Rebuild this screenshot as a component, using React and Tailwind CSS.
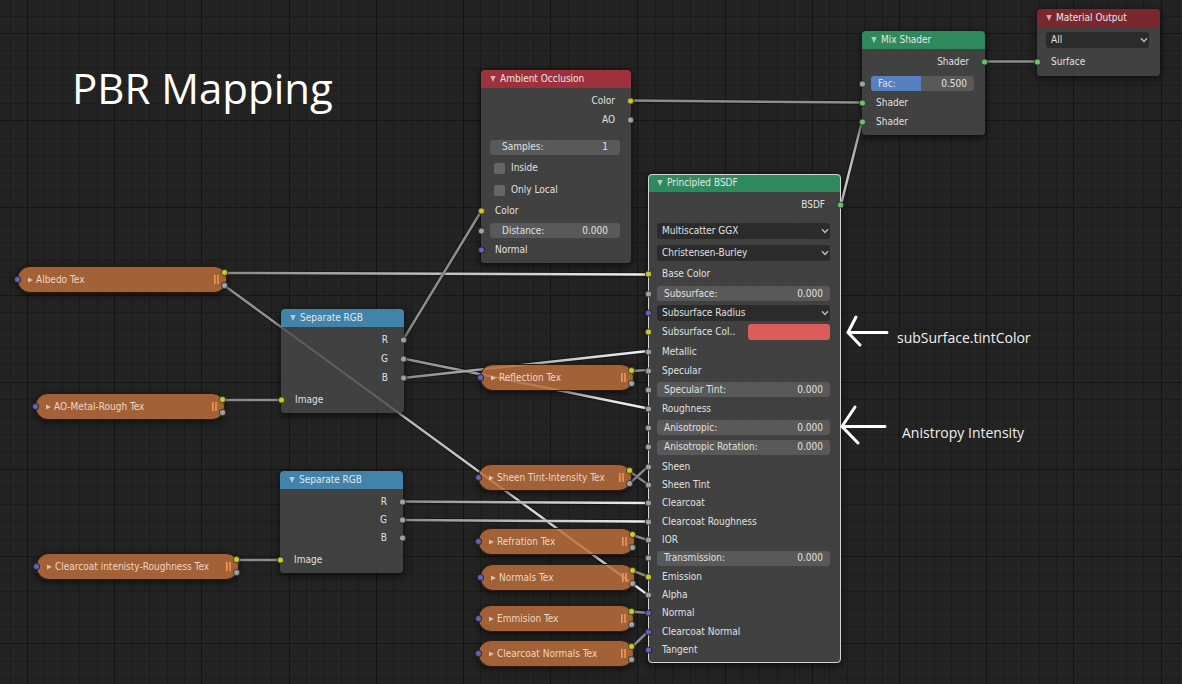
import React from "react";

const SOCKET_COLORS = {
  yellow: "bg-[#c7c73a]",
  gray: "bg-[#a1a1a1]",
  blue: "bg-[#6363b8]",
  green: "bg-[#6bc46b]",
};

const HEADER_COLORS = {
  red: "bg-[#a7333f]/95",
  darkred: "bg-[#812832]/95",
  green: "bg-[#2f9060]/95",
  blue: "bg-[#4389b2]/95",
};

const ROW_HEIGHTS = {
  18: "h-[18px]",
  19: "h-[19px]",
  20: "h-5",
  22: "h-[22px]",
};

function Socket({ color, side }) {
  return (
    <span
      className={`absolute top-1/2 z-10 size-[7px] -translate-y-1/2 rounded-full border border-black/60 ${SOCKET_COLORS[color]} ${
        side === "right" ? "-right-[3px]" : "-left-[3px]"
      }`}
    />
  );
}

function Row({ h = 19, socket, side = "left", children, className = "" }) {
  return (
    <div className={`relative flex items-center ${ROW_HEIGHTS[h]} ${className}`}>
      {socket && <Socket color={socket} side={side} />}
      {children}
    </div>
  );
}

function Output({ label, socket, h }) {
  return (
    <Row h={h} socket={socket} side="right" className="justify-end pr-4">
      {label}
    </Row>
  );
}

function Input({ label, socket, h }) {
  return (
    <Row h={h} socket={socket} className="pl-[14px]">
      {label}
    </Row>
  );
}

function Field({ label, value, socket, h, wide = false }) {
  return (
    <Row h={h} socket={socket} className="pr-[11px] pl-[9px]">
      <label
        className={`flex h-[15px] w-full items-center justify-between rounded-[3px] bg-[#595959] ${
          wide ? "px-3" : "px-[7px]"
        }`}
      >
        <span className="whitespace-nowrap">{label}</span>
        <input
          type="text"
          defaultValue={value}
          className="w-10 min-w-0 bg-transparent text-right outline-none"
        />
      </label>
    </Row>
  );
}

function Dropdown({ label, value, socket, h = 22 }) {
  return (
    <Row h={h} socket={socket} className="pr-[11px] pl-[9px]">
      <div className="relative flex w-full items-center">
        <select
          aria-label={label}
          defaultValue={value}
          className="h-4 w-full appearance-none rounded-[3px] bg-[#2b2b2b] px-[5px] outline-none"
        >
          <option>{value}</option>
        </select>
        <svg
          viewBox="0 0 8 6"
          className="pointer-events-none absolute right-[1px] h-[6px] w-2"
          fill="none"
          stroke="#bdbdbd"
          strokeWidth="1.4"
        >
          <path d="M1 1.2 L4 4.4 L7 1.2" />
        </svg>
      </div>
    </Row>
  );
}

function Checkbox({ label }) {
  return (
    <Row h={22} className="pl-[13px]">
      <label className="flex items-center gap-[6px]">
        <input
          type="checkbox"
          className="size-[11px] appearance-none rounded-[2px] bg-[#666666] checked:bg-[#5680c2]"
        />
        {label}
      </label>
    </Row>
  );
}

function Slider({ label, value, socket }) {
  return (
    <Row socket={socket} className="pr-[11px] pl-[9px]">
      <div className="relative flex h-[15px] w-full items-center">
        <input
          id="mix-fac"
          type="range"
          min="0"
          max="1"
          step="0.001"
          defaultValue={value}
          className="h-[15px] w-full appearance-none rounded-[3px] bg-[linear-gradient(to_right,#5680c2_49%,#595959_49%)] [&::-webkit-slider-thumb]:appearance-none [&::-webkit-slider-thumb]:opacity-0"
        />
        <div className="pointer-events-none absolute inset-0 flex items-center justify-between px-[7px]">
          <label htmlFor="mix-fac">{label}</label>
          <output htmlFor="mix-fac">{value}</output>
        </div>
      </div>
    </Row>
  );
}

function Node({ title, color, place, selected = false, children }) {
  return (
    <section
      className={`absolute rounded-[4px] shadow-[0_2px_7px_1px_rgba(0,0,0,0.55)] ${
        selected ? "outline outline-1 -outline-offset-1 outline-[#d6d6d6]" : ""
      } ${place}`}
    >
      <header
        className={`flex h-[18px] items-center gap-1 rounded-t-[4px] pl-[9px] text-[#e6e6e6] ${HEADER_COLORS[color]}`}
      >
        <button type="button" aria-label={`Collapse ${title}`} className="flex">
          <svg viewBox="0 0 6 6" className="size-[6px]" fill="#ffffff" fillOpacity="0.6">
            <path d="M0.3 0 H5.7 L3 6 Z" />
          </svg>
        </button>
        <h2>{title}</h2>
      </header>
      <div className="rounded-b-[4px] bg-[#484848]/80 pt-[3px] pb-1">{children}</div>
    </section>
  );
}

function TextureNode({ title, place }) {
  return (
    <section
      className={`absolute flex h-[27px] items-center justify-between rounded-[13px] border border-[#2c1a10] bg-[#b86c3b]/85 pr-[7px] pl-[10px] text-[#ecd6c6] shadow-[0_2px_6px_1px_rgba(0,0,0,0.5)] ${place}`}
    >
      <span className="absolute top-[9px] -left-1 z-10 size-[7px] rounded-full border border-black/60 bg-[#6363b8]" />
      <div className="flex items-center gap-[3px]">
        <button type="button" aria-label={`Expand ${title}`} className="flex">
          <svg viewBox="0 0 5 6" className="h-[6px] w-[5px]" fill="#ffffff" fillOpacity="0.6">
            <path d="M0 0.5 L5 3 L0 5.5 Z" />
          </svg>
        </button>
        <h2 className="whitespace-nowrap">{title}</h2>
      </div>
      <svg viewBox="0 0 5 9" className="h-[9px] w-[5px]" fill="#f59350">
        <path d="M0 0 H1.6 V9 H0 Z M3.2 0 H4.8 V9 H3.2 Z" />
      </svg>
      <span className="absolute top-[2px] -right-[2px] z-10 size-[7px] rounded-full border border-black/60 bg-[#c7c73a]" />
      <span className="absolute top-[15px] -right-[2px] z-10 size-[7px] rounded-full border border-black/60 bg-[#a1a1a1]" />
    </section>
  );
}

// Each link: x1, y1, x2, y2 and the end that glows towards the selected node.
const LINKS = [
  [631, 100.5, 862, 102.5, ""],
  [984, 61.5, 1038, 61.5, ""],
  [841, 204.5, 862, 121.5, "start"],
  [225, 273, 648, 274.5, "end"],
  [225, 286, 648, 595, "end"],
  [403, 340, 481, 211.5, ""],
  [403, 358.5, 648, 408.5, "end"],
  [403, 378, 648, 351, "end"],
  [222, 400, 281, 400, ""],
  [237, 560, 280, 560, ""],
  [402, 501.5, 648, 503, "end"],
  [402, 520, 648, 521.5, "end"],
  [632, 371, 648, 370, ""],
  [629, 471, 648, 484.5, ""],
  [629, 484, 648, 466.5, ""],
  [632, 535, 648, 540, ""],
  [632, 570.5, 648, 576.5, ""],
  [631, 611.5, 648, 613, ""],
  [632, 647, 648, 631.5, ""],
];

function Links() {
  return (
    <svg className="pointer-events-none absolute inset-0 size-full overflow-visible" strokeLinecap="round">
      <defs>
        {LINKS.map(([x1, y1, x2, y2, glow], i) => (
          <linearGradient key={i} id={`link-${i}`} gradientUnits="userSpaceOnUse" x1={x1} y1={y1} x2={x2} y2={y2}>
            <stop offset="0" stopColor={glow === "start" ? "#e6e6e6" : "#8a8a8a"} />
            <stop offset="1" stopColor={glow === "end" ? "#f2f2f2" : "#8f8f8f"} />
          </linearGradient>
        ))}
      </defs>
      {LINKS.map(([x1, y1, x2, y2], i) => (
        <g key={i}>
          <path d={`M${x1} ${y1} L${x2} ${y2}`} stroke="#000000" strokeOpacity="0.3" strokeWidth="4.5" />
          <path d={`M${x1} ${y1} L${x2} ${y2}`} stroke={`url(#link-${i})`} strokeWidth="2.5" />
        </g>
      ))}
    </svg>
  );
}

const TILE = 436;
const STEPS = Array.from({ length: 25 }, (_, i) => ({
  at: Math.round((i * TILE) / 25),
  major: i % 5 === 0,
}));

function Grid() {
  return (
    <svg className="absolute inset-0 size-full" shapeRendering="crispEdges">
      <defs>
        <pattern id="grid" x="27" y="33" width={TILE} height={TILE} patternUnits="userSpaceOnUse">
          {STEPS.map(({ at, major }) => (
            <g key={at} fill={major ? "#151515" : "#1c1c1c"}>
              <rect x={at} y="0" width="1" height={TILE} />
              <rect x="0" y={at} width={TILE} height="1" />
            </g>
          ))}
        </pattern>
      </defs>
      <rect width="100%" height="100%" fill="url(#grid)" />
    </svg>
  );
}

function Arrow({ place, d, box }) {
  return (
    <svg
      viewBox={box}
      className={`absolute ${place}`}
      fill="none"
      stroke="#ffffff"
      strokeWidth="3"
      strokeLinecap="round"
    >
      <path d={d} />
    </svg>
  );
}

export default function App() {
  return (
    <main className="relative min-h-screen w-full overflow-hidden bg-[#232323] font-['DejaVu_Sans_Condensed','DejaVu_Sans',sans-serif] text-[10px] leading-[14px] text-[#e0e0e0]">
      <Grid />
      <Links />

      <h1 className="absolute top-[62px] left-[72px] font-['Open_Sans',sans-serif] text-[42px] leading-[52px] text-white">
        PBR Mapping
      </h1>

      <TextureNode title="Albedo Tex" place="left-[17px] top-[266px] w-[210px]" />
      <TextureNode title="AO-Metal-Rough Tex" place="left-[35px] top-[393px] w-[190px]" />
      <TextureNode title="Clearcoat intenisty-Roughness Tex" place="left-[36px] top-[553px] w-[203px]" />
      <TextureNode title="Reflection Tex" place="left-[480px] top-[364px] w-[154px]" />
      <TextureNode title="Sheen Tint-Intensity Tex" place="left-[478px] top-[464px] w-[154px]" />
      <TextureNode title="Refration Tex" place="left-[478px] top-[528px] w-[157px]" />
      <TextureNode title="Normals Tex" place="left-[480px] top-[564px] w-[155px]" />
      <TextureNode title="Emmision Tex" place="left-[478px] top-[605px] w-[156px]" />
      <TextureNode title="Clearcoat Normals Tex" place="left-[478px] top-[640px] w-[156px]" />

      <Node title="Separate RGB" color="blue" place="left-[281px] top-[309px] w-[123px]">
        <Output label="R" socket="gray" />
        <Output label="G" socket="gray" />
        <Output label="B" socket="gray" />
        <div className="mt-[3px]">
          <Input label="Image" socket="yellow" />
        </div>
      </Node>

      <Node title="Separate RGB" color="blue" place="left-[280px] top-[471px] w-[123px]">
        <Output label="R" socket="gray" />
        <Output label="G" socket="gray" h={18} />
        <Output label="B" socket="gray" h={18} />
        <div className="mt-[3px]">
          <Input label="Image" socket="yellow" />
        </div>
      </Node>

      <Node title="Ambient Occlusion" color="red" place="left-[481px] top-[70px] w-[150px]">
        <Output label="Color" socket="yellow" />
        <Output label="AO" socket="gray" />
        <div className="mt-2">
          <Field label="Samples:" value="1" h={20} wide />
          <Checkbox label="Inside" />
          <Checkbox label="Only Local" />
          <Input label="Color" socket="yellow" h={20} />
          <Field label="Distance:" value="0.000" socket="gray" wide />
          <Input label="Normal" socket="blue" />
        </div>
      </Node>

      <Node title="Principled BSDF" color="green" place="left-[648px] top-[174px] w-[193px]" selected>
        <Output label="BSDF" socket="green" />
        <div className="mt-[6px]">
          <Dropdown label="Distribution" value="Multiscatter GGX" />
          <Dropdown label="Subsurface method" value="Christensen-Burley" />
          <Input label="Base Color" socket="yellow" h={20} />
          <Field label="Subsurface:" value="0.000" socket="gray" />
          <Dropdown label="Subsurface radius" value="Subsurface Radius" socket="blue" h={19} />
          <Row h={20} socket="yellow" className="justify-between pr-[11px] pl-[14px]">
            <label htmlFor="subsurface-color">Subsurface Col..</label>
            <input
              id="subsurface-color"
              type="color"
              defaultValue="#dc5b5b"
              className="h-4 w-[82px] appearance-none overflow-hidden rounded-[3px] border-0 bg-transparent p-0 [&::-webkit-color-swatch]:border-0 [&::-webkit-color-swatch-wrapper]:p-0"
            />
          </Row>
          <Input label="Metallic" socket="gray" />
          <Input label="Specular" socket="gray" />
          <Field label="Specular Tint:" value="0.000" socket="gray" />
          <Input label="Roughness" socket="gray" />
          <Field label="Anisotropic:" value="0.000" socket="gray" />
          <Field label="Anisotropic Rotation:" value="0.000" socket="gray" h={20} />
          <Input label="Sheen" socket="gray" />
          <Input label="Sheen Tint" socket="gray" h={18} />
          <Input label="Clearcoat" socket="gray" h={18} />
          <Input label="Clearcoat Roughness" socket="gray" />
          <Input label="IOR" socket="gray" h={18} />
          <Field label="Transmission:" value="0.000" socket="gray" h={18} />
          <Input label="Emission" socket="yellow" />
          <Input label="Alpha" socket="gray" h={18} />
          <Input label="Normal" socket="blue" h={18} />
          <Input label="Clearcoat Normal" socket="blue" />
          <Input label="Tangent" socket="blue" h={18} />
        </div>
      </Node>

      <Node title="Mix Shader" color="green" place="left-[862px] top-[31px] w-[123px]">
        <Output label="Shader" socket="green" />
        <div className="mt-[3px]">
          <Slider label="Fac:" value="0.500" socket="gray" />
          <Input label="Shader" socket="green" />
          <Input label="Shader" socket="green" />
        </div>
      </Node>

      <Node title="Material Output" color="darkred" place="left-[1037px] top-[9px] w-[123px]">
        <Dropdown label="Target" value="All" h={20} />
        <div className="mt-[2px]">
          <Input label="Surface" socket="green" h={20} />
        </div>
      </Node>

      <Arrow place="left-[844px] top-[314px] h-[36px] w-[48px]" box="0 0 48 36" d="M43 18.500 H4 M12 3 L4 18.500 L16 31" />
      <p className="absolute top-[328px] left-[897px] font-['Open_Sans',sans-serif] text-[14px] leading-5 text-[#f0f0f0]">
        subSurface.tintColor
      </p>
      <Arrow place="left-[838px] top-[403px] h-[46px] w-[52px]" box="0 0 52 46" d="M47 23.500 H4 M17 4 L4 23.500 L20 40" />
      <p className="absolute top-[423px] left-[902px] font-['Open_Sans',sans-serif] text-[14px] leading-5 text-[#f0f0f0]">
        Anistropy Intensity
      </p>
    </main>
  );
}
